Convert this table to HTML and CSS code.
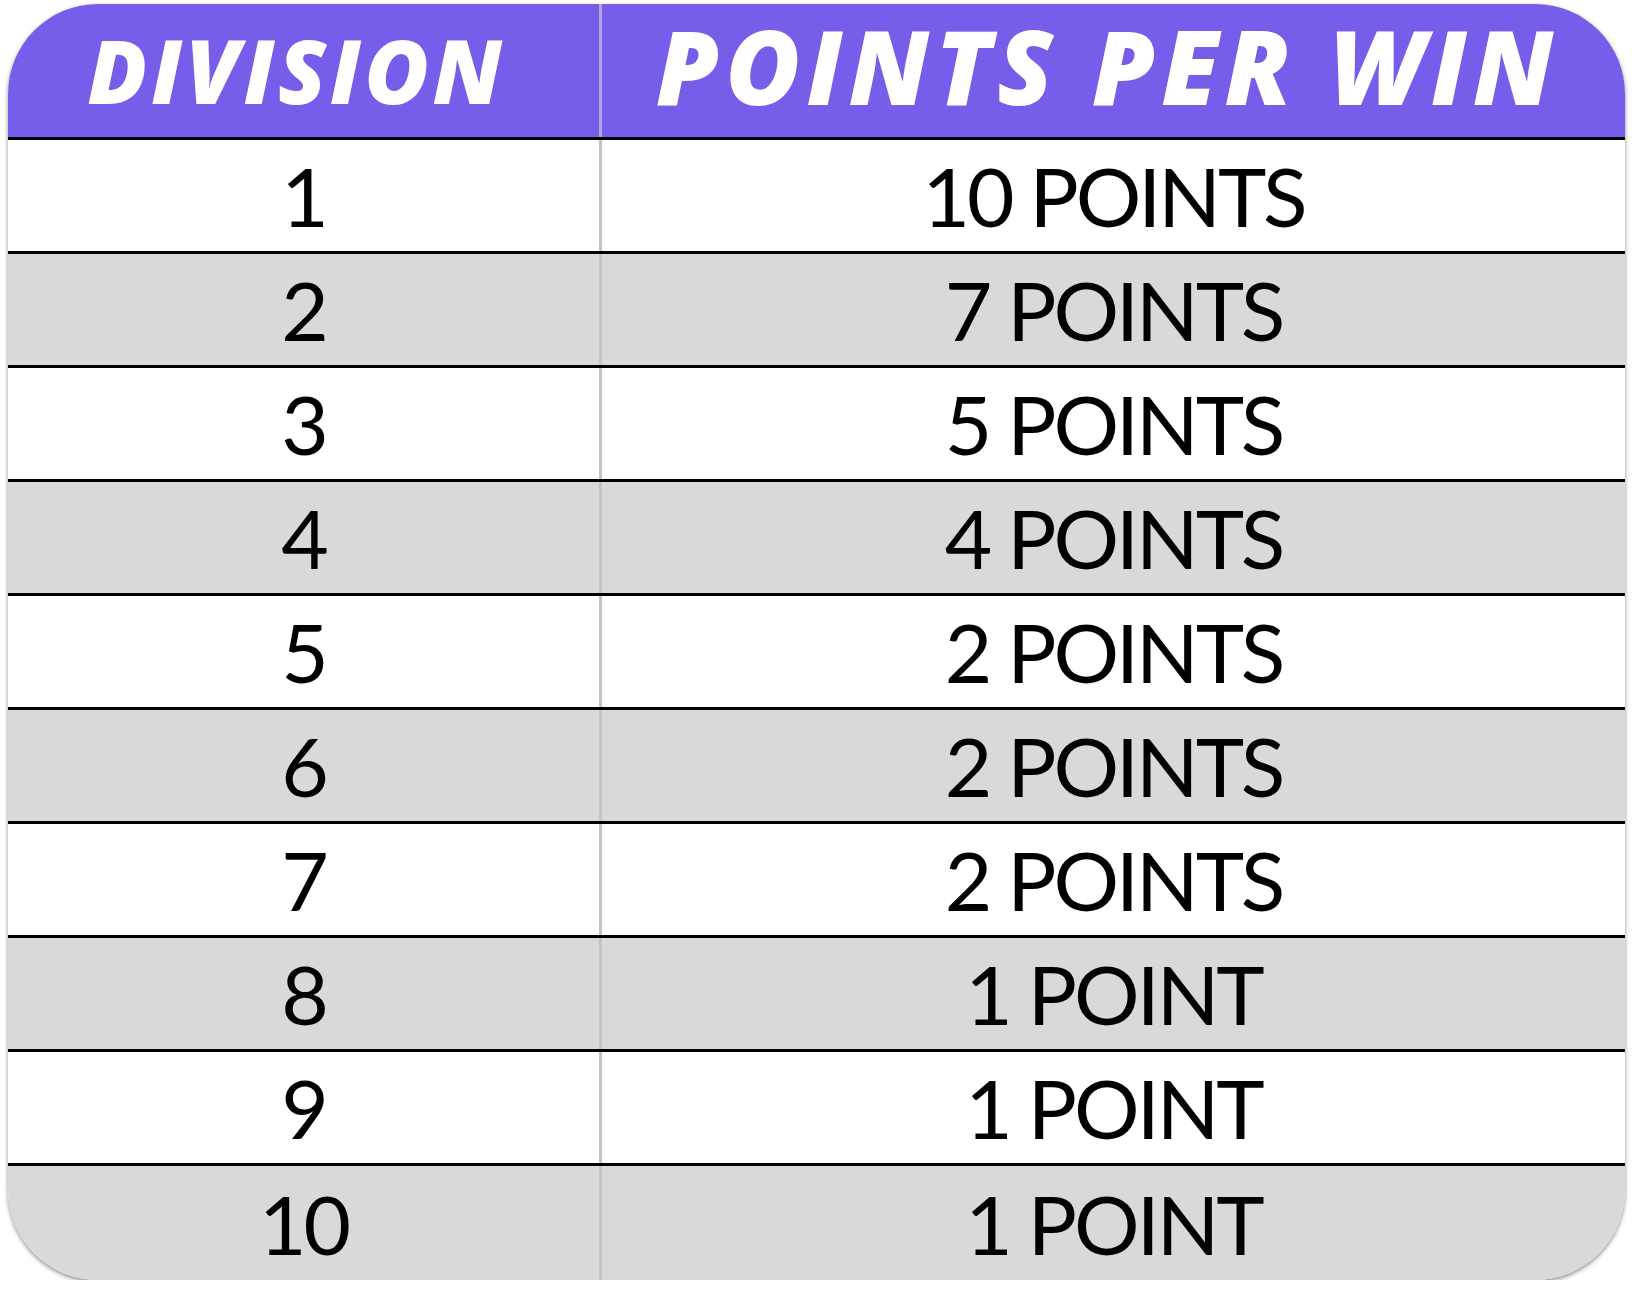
FILE: index.html
```html
<!DOCTYPE html>
<html>
<head>
<meta charset="utf-8">
<link rel="stylesheet" href="styles.css">
</head>
<body>
<div class="card">
  <div class="row head">
    <div class="cell c1">DIVISION</div>
    <div class="cell c2">POINTS PER WIN</div>
  </div>
  <div class="row"><div class="cell c1">1</div><div class="cell c2">10 POINTS</div></div>
  <div class="row alt"><div class="cell c1">2</div><div class="cell c2">7 POINTS</div></div>
  <div class="row"><div class="cell c1">3</div><div class="cell c2">5 POINTS</div></div>
  <div class="row alt"><div class="cell c1">4</div><div class="cell c2">4 POINTS</div></div>
  <div class="row"><div class="cell c1">5</div><div class="cell c2">2 POINTS</div></div>
  <div class="row alt"><div class="cell c1">6</div><div class="cell c2">2 POINTS</div></div>
  <div class="row"><div class="cell c1">7</div><div class="cell c2">2 POINTS</div></div>
  <div class="row alt"><div class="cell c1">8</div><div class="cell c2">1 POINT</div></div>
  <div class="row"><div class="cell c1">9</div><div class="cell c2">1 POINT</div></div>
  <div class="row alt last"><div class="cell c1">10</div><div class="cell c2">1 POINT</div></div>
</div>
</body>
</html>
```
FILE: styles.css
```css
html, body {
  margin: 0;
  padding: 0;
  background: #ffffff;
}
body {
  padding: 4px 9px 0 8px;
}
.card {
  width: 1617px;
  height: 1276px;
  border-radius: 90px;
  background: #ffffff;
  box-shadow: 0 2px 4px rgba(0, 0, 0, 0.45);
  display: grid;
  grid-template-rows: 136px repeat(10, 114px);
}
.row {
  display: grid;
  grid-template-columns: 594px 1fr;
  grid-template-rows: 100%;
  border-bottom: 3px solid #000000;
  box-sizing: border-box;
  background: #ffffff;
  min-height: 0;
}
.row.alt {
  background: #d9d9d9;
}
.row.last {
  border-bottom: none;
  border-radius: 0 0 90px 90px;
}
.cell {
  display: flex;
  align-items: center;
  justify-content: center;
  font-family: "Lato", "Liberation Sans", sans-serif;
  font-size: 82px;
  line-height: 1.2;
  color: #000000;
  letter-spacing: -3px;
  box-sizing: border-box;
  min-height: 0;
}
.c1 {
  border-right: 3px solid #c4c4c4;
}
.head {
  background: #785dea;
  border-radius: 90px 90px 0 0;
}
.head .cell {
  font-family: "Open Sans", "Liberation Sans", sans-serif;
  font-weight: 800;
  font-style: italic;
  font-size: 88px;
  color: #ffffff;
  letter-spacing: 3.5px;
}
.head .c1 {
  border-right-color: #b0a8d8;
  padding-right: 14px;
}
.head .c2 {
  font-size: 102px;
  letter-spacing: 6px;
  padding-bottom: 8px;
  padding-right: 12px;
}
```
